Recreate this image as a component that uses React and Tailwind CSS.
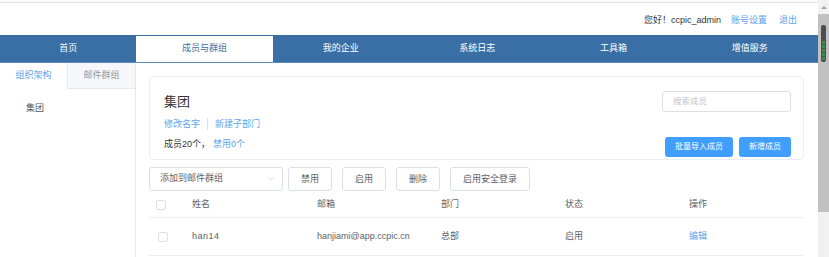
import { ChevronDown } from "lucide-react";

const font = "font-['Liberation_Sans','Noto_Sans_CJK_SC',sans-serif]";

const navItems = ["首页", "成员与群组", "我的企业", "系统日志", "工具箱", "增值服务"];

const Checkbox = ({ className = "" }) => (
  <span className={`block w-[10px] h-[10px] border border-[#dcdfe6] rounded-[2px] bg-white ${className}`} />
);

const ToolButton = ({ children }) => (
  <button className="h-[24px] px-[12px] border border-[#dcdfe6] rounded-[3px] bg-white text-[9px] text-[#606266] leading-none">
    {children}
  </button>
);

const App = () => {
  return (
    <div className={`flex w-[829px] h-[257px] overflow-hidden bg-white ${font}`}>
      <div className="w-[818px] flex flex-col">
        <div className="h-[3px] shrink-0 border-b border-[#e3e3e3] bg-[#fafafa]" />

        <div className="h-[32px] shrink-0 flex items-center justify-end pt-[4px] pr-[21px] text-[9px]">
          <span className="text-[#333]">您好！ccpic_admin</span>
          <a className="ml-[10px] text-[#5ba4ee]">账号设置</a>
          <a className="ml-[12px] text-[#5ba4ee]">退出</a>
        </div>

        <nav className="h-[28px] shrink-0 flex bg-[#3a6fa6] border-b border-[#5b8bbd]">
          {navItems.map((item, i) => (
            <div
              key={item}
              className={`flex-1 flex items-center justify-center text-[9px] ${
                i === 1 ? "bg-white text-[#3a6fa6] mt-px" : "text-white"
              }`}
            >
              {item}
            </div>
          ))}
        </nav>

        <div className="flex flex-1 min-h-0">
          <aside className="w-[136px] shrink-0 border-r border-[#e4e7ed] flex flex-col">
            <div className="flex h-[26px] shrink-0">
              <div className="w-[67px] flex items-center justify-center text-[9px] text-[#5ba4ee] bg-white">
                组织架构
              </div>
              <div className="flex-1 flex items-center justify-center text-[9px] text-[#999] bg-[#f5f7fa] border-l border-b border-[#e4e7ed]">
                邮件群组
              </div>
            </div>
            <div className="pt-[9px] pl-[26px] text-[9px] leading-[20px] text-[#555]">集团</div>
          </aside>

          <main className="flex-1 pl-[13px] pr-[14px] pt-[13px] flex flex-col">
            <section className="h-[84px] shrink-0 border border-[#ebeef5] rounded-[4px] flex justify-between pl-[14px] pr-[12px]">
              <div className="pt-[13px]">
                <h2 className="text-[13px] leading-[24px] text-[#333]">集团</h2>
                <div className="flex items-center text-[9px] leading-[20px] text-[#5ba4ee]">
                  <span>修改名字</span>
                  <span className="mx-[7px] h-[12px] w-px bg-[#dcdfe6]" />
                  <span>新建子部门</span>
                </div>
                <div className="text-[9px] leading-[20px] text-[#333]">
                  成员20个，<span className="ml-[3px] text-[#5ba4ee]">禁用0个</span>
                </div>
              </div>
              <div className="flex flex-col items-end justify-between pt-[14px] pb-[2px]">
                <div className="w-[129px] h-[21px] border border-[#dcdfe6] rounded-[3px] flex items-center pl-[10px] text-[8.5px] text-[#c0c4cc]">
                  搜索成员
                </div>
                <div className="flex gap-[6px]">
                  <button className="h-[20px] w-[68px] rounded-[3px] bg-[#409eff] text-white text-[8px]">批量导入成员</button>
                  <button className="h-[20px] w-[52px] rounded-[3px] bg-[#409eff] text-white text-[8px]">新增成员</button>
                </div>
              </div>
            </section>

            <div className="mt-[7px] flex items-center">
              <div className="w-[134px] h-[24px] border border-[#dcdfe6] rounded-[3px] flex items-center justify-between pl-[10px] pr-[6px] text-[9px] text-[#606266]">
                添加到邮件群组
                <ChevronDown size={10} strokeWidth={1.5} className="text-[#c0c4cc]" />
              </div>
              <div className="ml-[5px] flex gap-[10px]">
                <ToolButton>禁用</ToolButton>
                <ToolButton>启用</ToolButton>
                <ToolButton>删除</ToolButton>
                <ToolButton>启用安全登录</ToolButton>
              </div>
            </div>

            <div className="text-[9px] text-[#606266]">
              <div className="h-[27px] flex items-center border-b border-[#ebeef5] pt-px">
                <div className="w-[43px] pl-[7px]">
                  <Checkbox />
                </div>
                <div className="w-[125px]">姓名</div>
                <div className="w-[124px]">邮箱</div>
                <div className="w-[124px]">部门</div>
                <div className="w-[124px]">状态</div>
                <div>操作</div>
              </div>
              <div className="h-[38px] flex items-center border-b border-[#ebeef5] pt-px">
                <div className="w-[43px] pl-[9px]">
                  <Checkbox />
                </div>
                <div className="w-[125px] tracking-[0.5px]">han14</div>
                <div className="w-[124px]">hanjiami@app.ccpic.cn</div>
                <div className="w-[124px]">总部</div>
                <div className="w-[124px]">启用</div>
                <div className="text-[#5ba4ee]">编辑</div>
              </div>
            </div>
          </main>
        </div>
      </div>

      <div className="w-[11px] shrink-0 flex flex-col bg-[#f1f1f1]">
        <div className="h-[14px] flex items-center justify-center">
          <span className="w-0 h-0 border-l-[3px] border-r-[3px] border-b-[3px] border-l-transparent border-r-transparent border-b-[#a3a3a3]" />
        </div>
        <div className="h-[198px] bg-[#c1c1c1] pt-[11px] pl-[3px]">
          <div className="w-[5px] h-[37px] rounded-[2px] bg-[#4d4d4d] flex flex-col justify-end gap-[1px] pb-[2px] px-px">
            <span className="h-[3px] bg-[#3f8a4d]" />
            <span className="h-[3px] bg-[#3f8a4d]" />
            <span className="h-[3px] bg-[#3f8a4d]" />
            <span className="h-[3px] bg-[#3f8a4d]" />
            <span className="h-[3px] bg-[#3f8a4d]" />
          </div>
        </div>
      </div>
    </div>
  );
};

export default App;
